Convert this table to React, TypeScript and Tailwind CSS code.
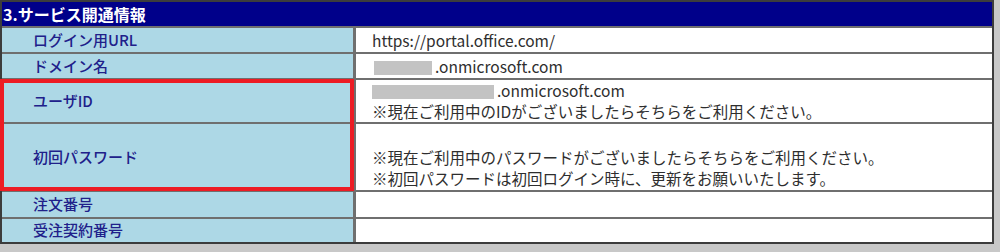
const FONT = '[font-family:"Noto_Sans_CJK_JP","Noto_Sans",sans-serif]'

type Row = {
  label: string
  height: string
  value: React.ReactNode
}

const Blank = ({ w }: { w: string }) => (
  <span className={`inline-block h-[14px] bg-[#c3c3c3] align-[-2px] ${w}`} />
)

const ROWS: Row[] = [
  {
    label: 'ログイン用URL',
    height: 'h-[24px]',
    value: <p className="pl-[16px]">https://portal.office.com/</p>
  },
  {
    label: 'ドメイン名',
    height: 'h-[24px]',
    value: (
      <p className="pl-[18px]">
        <Blank w="w-[58px]" />
        <span className="ml-[3px]">.onmicrosoft.com</span>
      </p>
    )
  },
  {
    label: 'ユーザID',
    height: 'h-[42px]',
    value: (
      <div className="pl-[16px]">
        <p>
          <Blank w="w-[122px]" />
          <span className="ml-[3px]">.onmicrosoft.com</span>
        </p>
        <p>※現在ご利用中のIDがございましたらそちらをご利用ください。</p>
      </div>
    )
  },
  {
    label: '初回パスワード',
    height: 'h-[66px]',
    value: (
      <div className="pl-[16px]">
        <p>&nbsp;</p>
        <p>※現在ご利用中のパスワードがございましたらそちらをご利用ください。</p>
        <p>※初回パスワードは初回ログイン時に、更新をお願いいたします。</p>
      </div>
    )
  },
  { label: '注文番号', height: 'h-[25px]', value: null },
  { label: '受注契約番号', height: 'h-[23px]', value: null }
]

export default function App() {
  return (
    <div className={`h-[252px] w-[1000px] bg-[#c8c8c8] ${FONT}`}>
      <div className="relative w-[994px] border-2 border-[#3c3c3c] bg-[#6f6f6f]">
        <div className="flex h-[24px] items-center bg-[#00008a] pl-[1px] text-[16px] font-bold text-white">
          3.サービス開通情報
        </div>
        {ROWS.map((row) => {
          return (
            <div
              key={row.label}
              className={`mt-[2px] flex ${row.height}`}
            >
              <div className="flex w-[351px] items-center bg-[#add8e6] pl-[31px] text-[15px] font-medium text-[#20208a]">
                {row.label}
              </div>
              <div className="ml-[3px] flex flex-1 flex-col justify-center bg-white text-[15.5px] leading-[21px] text-[#2e2e2e]">
                {row.value}
              </div>
            </div>
          )
        })}
        <div className="pointer-events-none absolute left-[-2px] top-[77px] h-[112px] w-[354px] border-4 border-[#ec1c24]" />
      </div>
    </div>
  )
}
